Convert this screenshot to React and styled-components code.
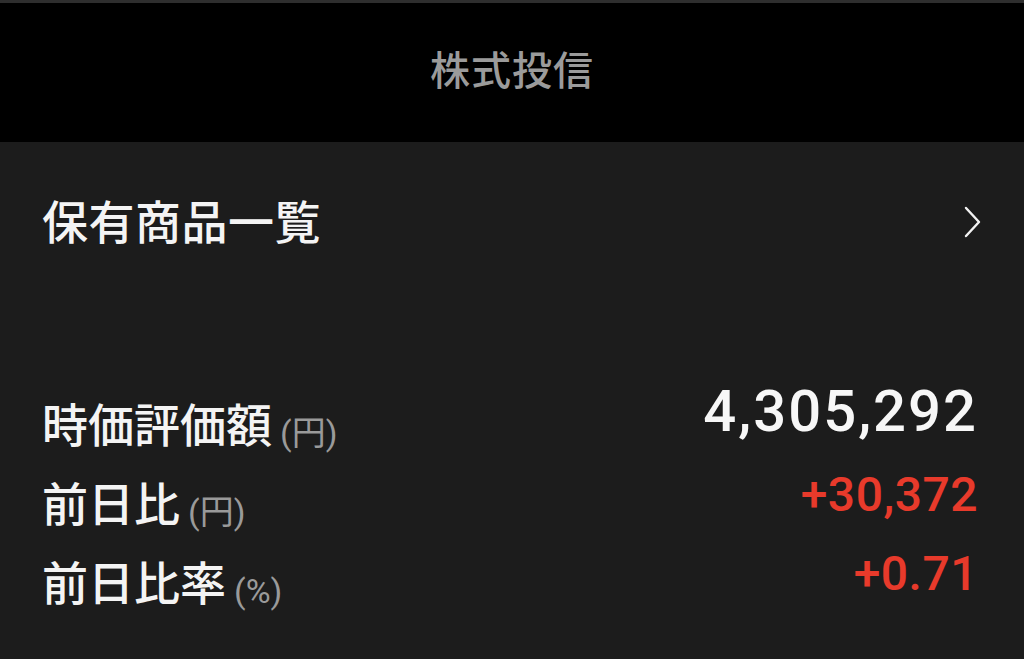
import React from "react";
import styled, { createGlobalStyle } from "styled-components";

const GlobalStyle = createGlobalStyle`
  html, body {
    margin: 0;
    padding: 0;
    background: #1c1c1c;
  }
  body {
    font-family: "Noto Sans CJK JP", "Noto Sans", sans-serif;
    -webkit-font-smoothing: antialiased;
  }
`;

const summary = [
  { label: "時価評価額", unit: "(円)", value: "4,305,292", tone: "plain" },
  { label: "前日比", unit: "(円)", value: "+30,372", tone: "up" },
  { label: "前日比率", unit: "(%)", value: "+0.71", tone: "up" },
];

const ChevronRight = () => (
  <svg width="22" height="32" viewBox="0 0 22 32" fill="none">
    <polyline
      points="4,2 17,16 4,30"
      stroke="#f2f2f2"
      strokeWidth="2.4"
      strokeLinecap="round"
      strokeLinejoin="round"
    />
  </svg>
);

const App = () => (
  <>
    <GlobalStyle />
    <Screen>
      <Header>
        <Title>株式投信</Title>
      </Header>

      <ListLink>
        <LinkText>保有商品一覧</LinkText>
        <ChevronRight />
      </ListLink>

      <Summary>
        {summary.map((row) => (
          <Row key={row.label}>
            <Label>
              {row.label}
              <Unit>{row.unit}</Unit>
            </Label>
            <Value $tone={row.tone} $big={row.tone === "plain"}>
              {row.value}
            </Value>
          </Row>
        ))}
      </Summary>
    </Screen>
  </>
);

export default App;

/* ================= STYLES ================= */

const Screen = styled.div`
  width: 1024px;
  height: 659px;
  background: #1c1c1c;
  overflow: hidden;
`;

const Header = styled.header`
  height: 139px;
  border-top: 3px solid #2e2e2e;
  background: #000000;
  display: flex;
  align-items: center;
  justify-content: center;
`;

const Title = styled.h1`
  margin: 0 0 10px;
  font-size: 40px;
  font-weight: 500;
  color: #9b9b9b;
  letter-spacing: 1px;
  line-height: 1;
`;

const ListLink = styled.a`
  display: flex;
  align-items: center;
  justify-content: space-between;
  height: 160px;
  padding: 0 40px 0 42px;
  color: #f4f4f4;
  text-decoration: none;
  cursor: pointer;
`;

const LinkText = styled.span`
  font-size: 46px;
  font-weight: 500;
  line-height: 1;
  letter-spacing: 0.5px;
  margin-bottom: 6px;
`;

const Summary = styled.section`
  padding: 80px 46px 0 42px;
  display: flex;
  flex-direction: column;
`;

const Row = styled.div`
  display: flex;
  align-items: center;
  justify-content: space-between;
  height: 79px;
`;

const Label = styled.span`
  font-size: 46px;
  font-weight: 500;
  line-height: 1;
  color: #f4f4f4;
  display: flex;
  align-items: flex-end;
`;

const Unit = styled.span`
  font-family: "Roboto", "Noto Sans CJK JP", sans-serif;
  font-size: 34px;
  font-weight: 400;
  color: #9a9a9a;
  margin-left: 8px;
  margin-bottom: -5px;
`;

const Value = styled.span`
  font-family: "Roboto", "Liberation Sans", sans-serif;
  font-weight: 500;
  font-size: ${(p) => (p.$big ? "58px" : "48px")};
  letter-spacing: ${(p) => (p.$big ? "2px" : "0.5px")};
  line-height: 1;
  color: ${(p) => (p.$tone === "up" ? "#e83a2b" : "#f7f7f7")};
  margin-top: ${(p) => (p.$big ? "-22px" : "-12px")};
`;
